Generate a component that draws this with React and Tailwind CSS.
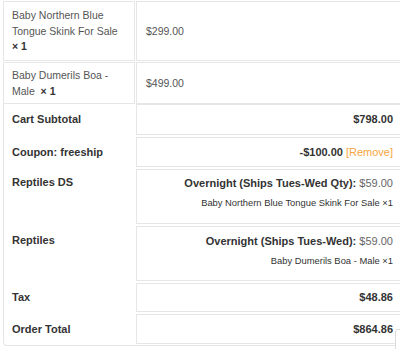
import React from 'react';

const items = [
    { name: 'Baby Northern Blue Tongue Skink For Sale', price: '$299.00', h: 'h-[60px]', pad: '' },
    { name: 'Baby Dumerils Boa - Male', price: '$499.00', h: 'h-[42px]', pad: '\u00a0' },
];

const App = () => {
    return (
        <div className="relative w-[400px] h-[349px] overflow-hidden bg-white text-[#333]" style={{ fontFamily: '"Liberation Sans", Arial, sans-serif' }}>
            <div className="ml-[3px] mt-[1px] w-[400px]">
                {/* Cart items */}
                <div className="flex flex-col gap-[1px]">
                    {items.map((item) => (
                        <div key={item.name} className={`flex gap-[1px] ${item.h}`}>
                            <div className="w-[132px] shrink-0 border border-[#e6e6e6] pl-[8px] pr-[8px] pt-[1px] flex items-center">
                                <p className="text-[10.5px] leading-[15.5px] text-[#555]">
                                    {item.name}{item.pad}{' '}
                                    <strong className="whitespace-nowrap text-[#333]">×&nbsp;1</strong>
                                </p>
                            </div>
                            <div className="flex-1 border border-[#e6e6e6] pl-[9px] pt-[1px] flex items-center text-[10.5px] text-[#555]">
                                {item.price}
                            </div>
                        </div>
                    ))}
                </div>

                {/* Cart totals */}
                <div className="border-x border-b border-[#e6e6e6] rounded-b-[4px] pb-[1px] grid grid-cols-[132px_1fr] gap-y-[2px] text-[11px]">
                    <div className="flex items-center pl-[8px] font-bold">Cart Subtotal</div>
                    <div className="h-[31px] border border-[#e6e6e6] flex items-center justify-end pr-[8px] font-bold">$798.00</div>

                    <div className="flex items-center pl-[8px] font-bold">Coupon: freeship</div>
                    <div className="h-[30px] border border-[#e6e6e6] flex items-center justify-end pr-[8px]">
                        <span className="font-bold">-$100.00</span>
                        <span className="ml-[3px] text-[#f5a540]">[Remove]</span>
                    </div>

                    <div className="pl-[8px] pt-[5px] leading-[16px] font-bold">Reptiles DS</div>
                    <div className="h-[55px] border border-[#e6e6e6] pr-[8px] pt-[5px] text-right">
                        <p className="leading-[16px]">
                            <span className="font-bold">Overnight (Ships Tues-Wed Qty):</span>{' '}
                            <span className="text-[#666]">$59.00</span>
                        </p>
                        <p className="mt-[6px] text-[9.4px] leading-[12px] text-[#333]">Baby Northern Blue Tongue Skink For Sale ×1</p>
                    </div>

                    <div className="pl-[8px] pt-[6px] leading-[16px] font-bold">Reptiles</div>
                    <div className="h-[55px] border border-[#e6e6e6] pr-[8px] pt-[6px] text-right">
                        <p className="leading-[16px]">
                            <span className="font-bold">Overnight (Ships Tues-Wed):</span>{' '}
                            <span className="text-[#666]">$59.00</span>
                        </p>
                        <p className="mt-[6px] text-[9.4px] leading-[12px] text-[#333]">Baby Dumerils Boa - Male ×1</p>
                    </div>

                    <div className="flex items-center pl-[8px] font-bold">Tax</div>
                    <div className="h-[29px] border border-[#e6e6e6] flex items-center justify-end pr-[8px] font-bold">$48.86</div>

                    <div className="flex items-center pl-[8px] font-bold">Order Total</div>
                    <div className="h-[30px] border border-[#e6e6e6] flex items-center justify-end pr-[8px] font-bold">$864.86</div>
                </div>
            </div>

            {/* floating widget peeking in at the edge */}
            <div className="absolute left-[395px] top-[329px] w-[30px] h-[40px] bg-white border border-[#dcdcdc] rounded-tl-[3px]"></div>
        </div>
    );
};

export default App;
